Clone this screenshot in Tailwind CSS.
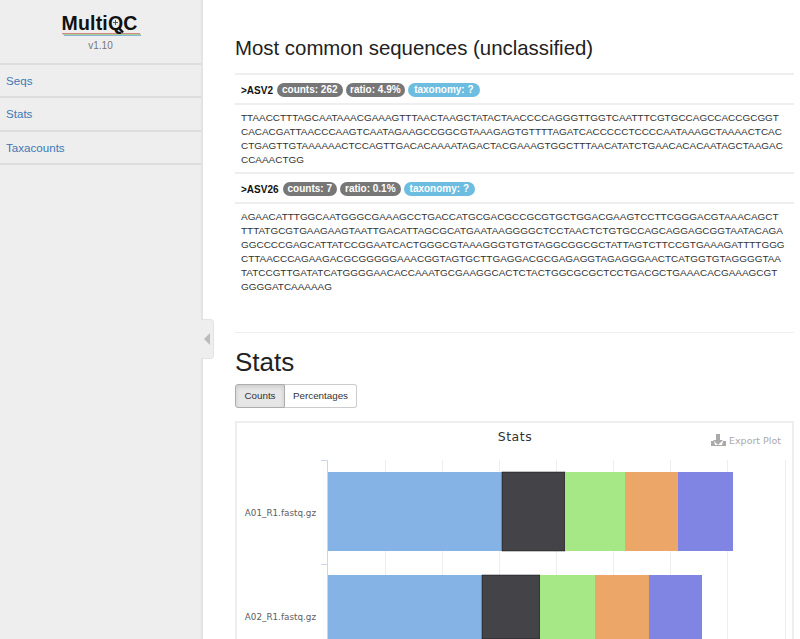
<!DOCTYPE html>
<html>

<head>
  <title>MultiQC Report</title>
  <meta charset="utf-8" />
  <script src="https://cdn.jsdelivr.net/npm/@tailwindcss/browser@4"></script>
</head>

<body class="font-['Liberation_Sans',sans-serif] text-[#333] h-[639px] overflow-hidden">
  <div class="flex h-[639px] overflow-hidden">
    <!-- sidebar -->
    <aside class="relative w-[203px] shrink-0 bg-[#eee] border-r-2 border-[#e3e3e3]">
      <div class="h-[65px] border-b-2 border-[#ddd] flex flex-col items-center pt-[12px]">
        <!-- logo: text plus magnifier over the Q, three colour stripes below -->
        <div class="relative w-[80px] pl-[1px]">
          <div class="font-bold text-[19.500px] leading-[20px] mt-[1px] text-[#111] tracking-[0.2px]">MultiQC</div>
          <svg class="absolute left-[46px] top-[2px]" width="24" height="22" viewBox="0 0 24 22">
            <path d="M6 8.500h5M8.500 6v5" stroke="#555" stroke-width="1"/>
            <path d="M11.500 13.500l4.500 5" stroke="#111" stroke-width="2.500"/>
          </svg>
          <div class="h-[1px] bg-[#d98a80] mr-[1px]"></div>
          <div class="h-[1px] bg-[#a5cf95] ml-[1px]"></div>
          <div class="h-[1px] bg-[#8ab4dc] ml-[2px]"></div>
        </div>
        <div class="text-[10px] leading-[12px] mt-[4px] text-[#777]">v1.10</div>
      </div>
      <nav class="text-[11.600px] text-[#3f78b4]">
        <div class="h-[33px] flex items-center pl-[6px] border-b-2 border-[#ddd]">Seqs</div>
        <div class="h-[34px] flex items-center pl-[6px] border-b-2 border-[#ddd]">Stats</div>
        <div class="h-[33px] flex items-center pl-[6px] border-b-2 border-[#ddd]">Taxacounts</div>
      </nav>
      <!-- collapse handle -->
      <div class="absolute left-[201px] top-[319px] w-[13px] h-[40px] bg-[#eee] rounded-r-[4px] border border-l-0 border-[#e3e3e3] flex items-center justify-center">
        <div class="w-0 h-0 border-y-[6px] border-y-transparent border-r-[6px] border-r-[#bbb]"></div>
      </div>
    </aside>

    <!-- main -->
    <main class="flex-1 pl-[32px] pr-[6px] min-w-0">
      <h2 class="text-[20.400px] leading-[24px] font-medium text-[#222] mt-[36px] mb-[13px]">Most common sequences (unclassified)</h2>

      <div class="border-t-2 border-[#eee] h-[30px] flex items-center pt-[2px] pl-[6px] gap-[3px] text-[10px]">
        <b class="text-[#111] mr-[1px]">&gt;ASV2</b>
        <span class="bg-[#777] text-white font-bold rounded-full px-[5px] h-[14px] leading-[14px]">counts: 262</span>
        <span class="bg-[#777] text-white font-bold rounded-full px-[4.500px] h-[14px] leading-[14px]">ratio: 4.9%</span>
        <span class="bg-[#6cbde0] text-white font-bold rounded-full px-[6px] h-[14px] leading-[14px]">taxonomy: ?</span>
      </div>
      <div class="border-t-2 border-[#eee] h-[69px] pl-[6px] pt-[6px] text-[9.950px] leading-[14px]">
        TTAACCTTTAGCAATAAACGAAAGTTTAACTAAGCTATACTAACCCCAGGGTTGGTCAATTTCGTGCCAGCCACCGCGGT<br>
        CACACGATTAACCCAAGTCAATAGAAGCCGGCGTAAAGAGTGTTTTAGATCACCCCCTCCCCAATAAAGCTAAAACTCAC<br>
        CTGAGTTGTAAAAAACTCCAGTTGACACAAAATAGACTACGAAAGTGGCTTTAACATATCTGAACACACAATAGCTAAGAC<br>
        CCAAACTGG
      </div>
      <div class="border-t-2 border-[#eee] h-[30px] flex items-center pt-[2px] pl-[6px] gap-[3px] text-[10px]">
        <b class="text-[#111] mr-[1px]">&gt;ASV26</b>
        <span class="bg-[#777] text-white font-bold rounded-full px-[5px] h-[14px] leading-[14px]">counts: 7</span>
        <span class="bg-[#777] text-white font-bold rounded-full px-[5px] h-[14px] leading-[14px]">ratio: 0.1%</span>
        <span class="bg-[#6cbde0] text-white font-bold rounded-full px-[6px] h-[14px] leading-[14px]">taxonomy: ?</span>
      </div>
      <div class="border-t-2 border-[#eee] pl-[6px] pt-[6px] text-[9.950px] leading-[14px]">
        AGAACATTTGGCAATGGGCGAAAGCCTGACCATGCGACGCCGCGTGCTGGACGAAGTCCTTCGGGACGTAAACAGCT<br>
        TTTATGCGTGAAGAAGTAATTGACATTAGCGCATGAATAAGGGGCTCCTAACTCTGTGCCAGCAGGAGCGGTAATACAGA<br>
        GGCCCCGAGCATTATCCGGAATCACTGGGCGTAAAGGGTGTGTAGGCGGCGCTATTAGTCTTCCGTGAAAGATTTTGGG<br>
        CTTAACCCAGAAGACGCGGGGGAAACGGTAGTGCTTGAGGACGCGAGAGGTAGAGGGAACTCATGGTGTAGGGGTAA<br>
        TATCCGTTGATATCATGGGGAACACCAAATGCGAAGGCACTCTACTGGCGCGCTCCTGACGCTGAAACACGAAAGCGT<br>
        GGGGATCAAAAAG
      </div>

      <div class="border-t border-[#eee] mt-[38px]"></div>
      <h2 class="text-[26px] leading-[30px] font-medium text-[#222] mt-[14px] mb-[7px]">Stats</h2>

      <div class="flex text-[9.800px] h-[24px] w-[122px] mb-[13px]">
        <div class="w-[50px] flex items-center justify-center bg-[#e6e6e6] border border-[#adadad] rounded-l-[3px] shadow-[inset_0_2px_4px_rgba(0,0,0,0.12)]">Counts</div>
        <div class="flex-1 flex items-center justify-center bg-white border border-l-0 border-[#ccc] rounded-r-[3px]">Percentages</div>
      </div>

      <!-- plot -->
      <div class="border-2 border-b-0 border-[#eee] h-[240px] overflow-hidden">
        <svg width="555" height="216" viewBox="237 423 555 216" class="block font-['DejaVu_Sans',sans-serif]">
          <text x="515" y="441" text-anchor="middle" font-size="12.500" fill="#333" letter-spacing="0.5">Stats</text>
          <g fill="#aaa">
            <path d="M716 434v6h-3l5 5 5-5h-3v-6z"/>
            <path d="M711 441h3l1 4h7l1-4h3v5h-15z"/>
          </g>
          <text x="729" y="444" font-size="9.500" fill="#aaa">Export Plot</text>
          <g stroke="#eee" stroke-width="1">
            <path d="M385.500 460V639M442.500 460V639M499.500 460V639M556.500 460V639M613.500 460V639M670.500 460V639M727.500 460V639M785.500 460V639"/>
          </g>
          <path d="M321 460.500h6.500V639M321 564.500h6" stroke="#ccd6eb" fill="none"/>
          <rect x="328" y="472" width="174" height="79" fill="#86b3e6"/>
          <rect x="502" y="472" width="63" height="79" fill="#434348" stroke="#111" stroke-width="0.5"/>
          <rect x="565" y="472" width="60" height="79" fill="#a6e885"/>
          <rect x="625" y="472" width="53" height="79" fill="#eca768"/>
          <rect x="678" y="472" width="55" height="79" fill="#8085e3"/>
          <rect x="328" y="575" width="154" height="64" fill="#86b3e6"/>
          <rect x="482" y="575" width="58" height="64" fill="#434348" stroke="#111" stroke-width="0.5"/>
          <rect x="540" y="575" width="55" height="64" fill="#a6e885"/>
          <rect x="595" y="575" width="54" height="64" fill="#eca768"/>
          <rect x="649" y="575" width="53" height="64" fill="#8085e3"/>
          <text x="316" y="516" text-anchor="end" font-size="8.800" fill="#606060">A01_R1.fastq.gz</text>
          <text x="316" y="620" text-anchor="end" font-size="8.800" fill="#606060">A02_R1.fastq.gz</text>
        </svg>
      </div>
    </main>
  </div>
</body>

</html>
